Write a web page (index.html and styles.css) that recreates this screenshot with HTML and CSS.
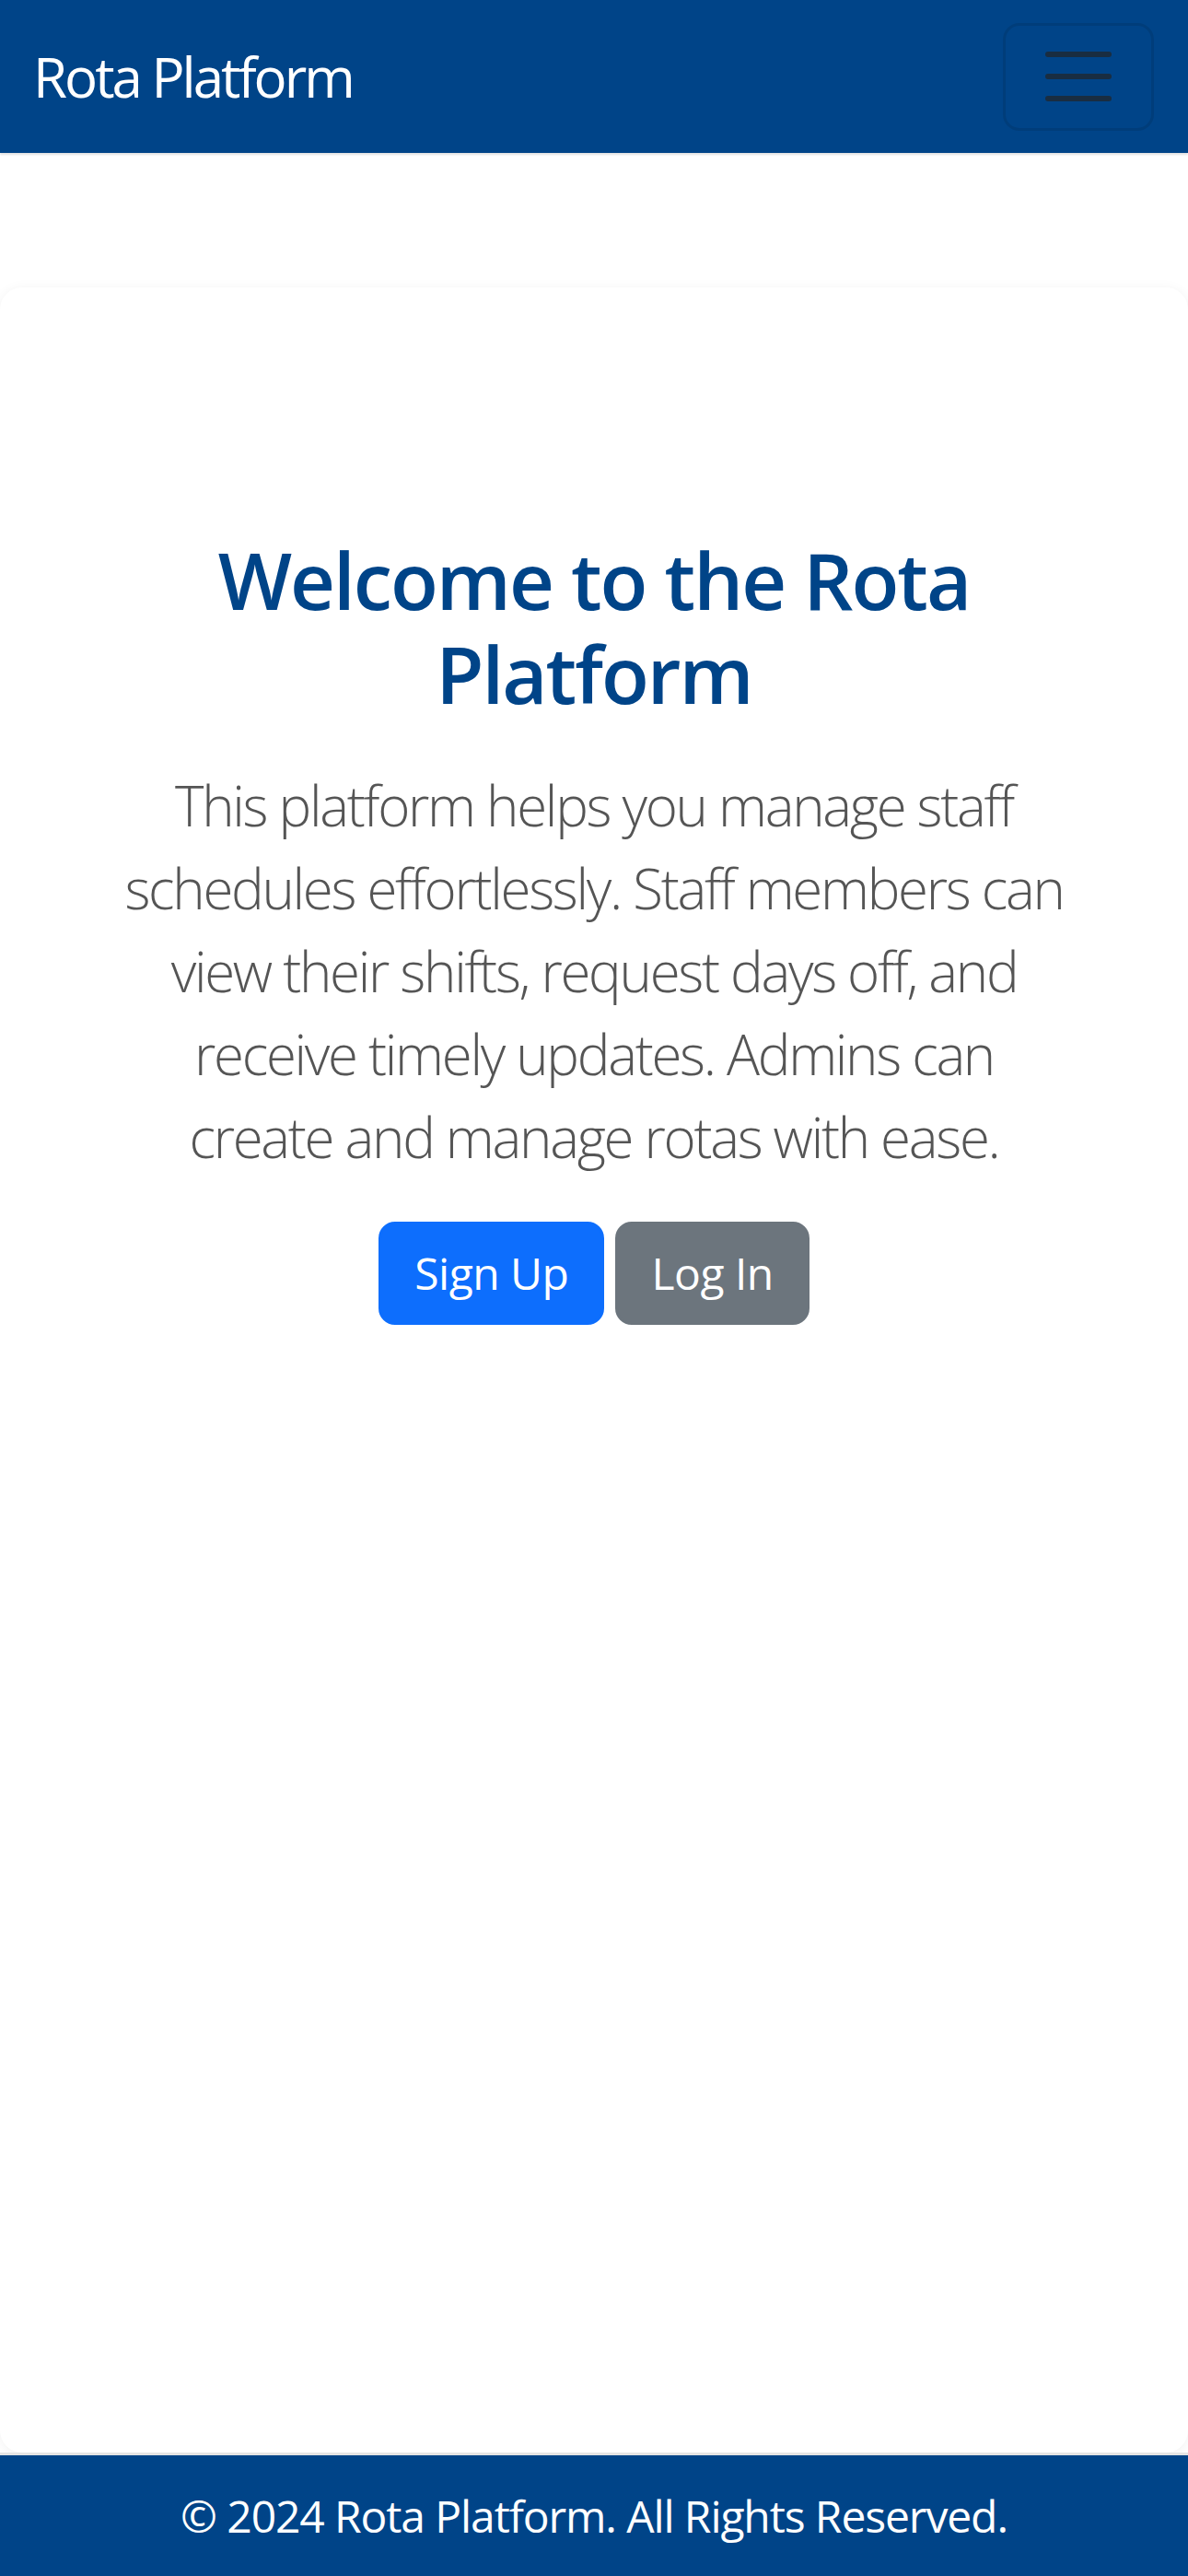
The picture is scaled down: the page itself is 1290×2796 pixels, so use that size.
FILE: index.html
```html
<!DOCTYPE html>
<html lang="en">
<head>
<meta charset="utf-8">
<title>Rota Platform</title>
<link rel="stylesheet" href="styles.css">
</head>
<body>
<nav class="navbar">
  <a class="brand" href="#">Rota Platform</a>
  <button class="toggler" type="button" aria-label="Toggle navigation">
    <svg class="toggler-icon" viewBox="0 0 30 30" width="90" height="90">
      <path d="M4 7h22M4 15h22M4 23h22" stroke="rgba(33,37,41,0.75)" stroke-width="2" stroke-linecap="round" fill="none"/>
    </svg>
  </button>
</nav>
<main class="card">
  <div class="hero">
    <h1 class="title">Welcome to the Rota Platform</h1>
    <p class="lead">This platform helps you manage staff schedules effortlessly. Staff members can view their shifts, request days off, and receive timely updates. Admins can create and manage rotas with ease.</p>
    <div class="actions">
      <a class="btn btn-primary" href="#">Sign Up</a>
      <a class="btn btn-secondary" href="#">Log In</a>
    </div>
  </div>
</main>
<footer class="footer">
  <p class="copy">© 2024 Rota Platform. All Rights Reserved.</p>
</footer>
</body>
</html>
```
FILE: styles.css
```css
* { box-sizing: border-box; }
html, body { margin: 0; padding: 0; }
body {
  font-family: "Open Sans", "Noto Sans", sans-serif;
  background: #fff;
  color: #212529;
  min-height: 100vh;
  display: flex;
  flex-direction: column;
}
.navbar {
  height: 166px;
  background: #004488;
  display: flex;
  align-items: center;
  justify-content: space-between;
  padding: 0 37px 0 36px;
  box-shadow: 0 2px 2px rgba(0,0,0,0.12);
  position: relative;
  z-index: 2;
}
.brand {
  color: #fff;
  text-decoration: none;
  font-size: 60px;
  line-height: 90px;
  letter-spacing: -3px;
}
.toggler {
  width: 164px;
  height: 117px;
  border: 3px solid rgba(0,0,0,0.1);
  border-radius: 18px;
  background: transparent;
  padding: 0;
  display: flex;
  align-items: center;
  justify-content: center;
}
.toggler-icon { display: block; }
.card {
  flex: 1;
  margin-top: 146px;
  background: #fff;
  border-radius: 24px;
  box-shadow: 0 2px 14px rgba(0,0,0,0.06);
  padding: 266px 131px 0;
}
.hero { text-align: center; }
.title {
  margin: 0 -36px 47px;
  font-size: 85px;
  line-height: 102px;
  font-weight: 600;
  letter-spacing: -2px;
  color: #004488;
}
.lead {
  margin: 0 0 47px;
  font-size: 60px;
  line-height: 90px;
  font-weight: 300;
  letter-spacing: -2.3px;
  color: #555;
}
.actions {
  display: flex;
  justify-content: center;
  gap: 12px;
}
.btn {
  display: inline-block;
  font-size: 48px;
  line-height: 72px;
  padding: 17px 36px;
  border: 3px solid transparent;
  border-radius: 18px;
  color: #fff;
  text-decoration: none;
  letter-spacing: -0.5px;
}
.btn-primary { background: #0d6efd; border-color: #0d6efd; }
.btn-secondary { background: #6c757d; border-color: #6c757d; }
.footer {
  margin-top: 3px;
  height: 131px;
  background: #004488;
  display: flex;
  align-items: center;
  justify-content: center;
  box-shadow: 0 -3px 0 #e4e4e4;
}
.copy {
  margin: 0;
  color: #fff;
  font-size: 48px;
  line-height: 72px;
  letter-spacing: -1.1px;
}
```
